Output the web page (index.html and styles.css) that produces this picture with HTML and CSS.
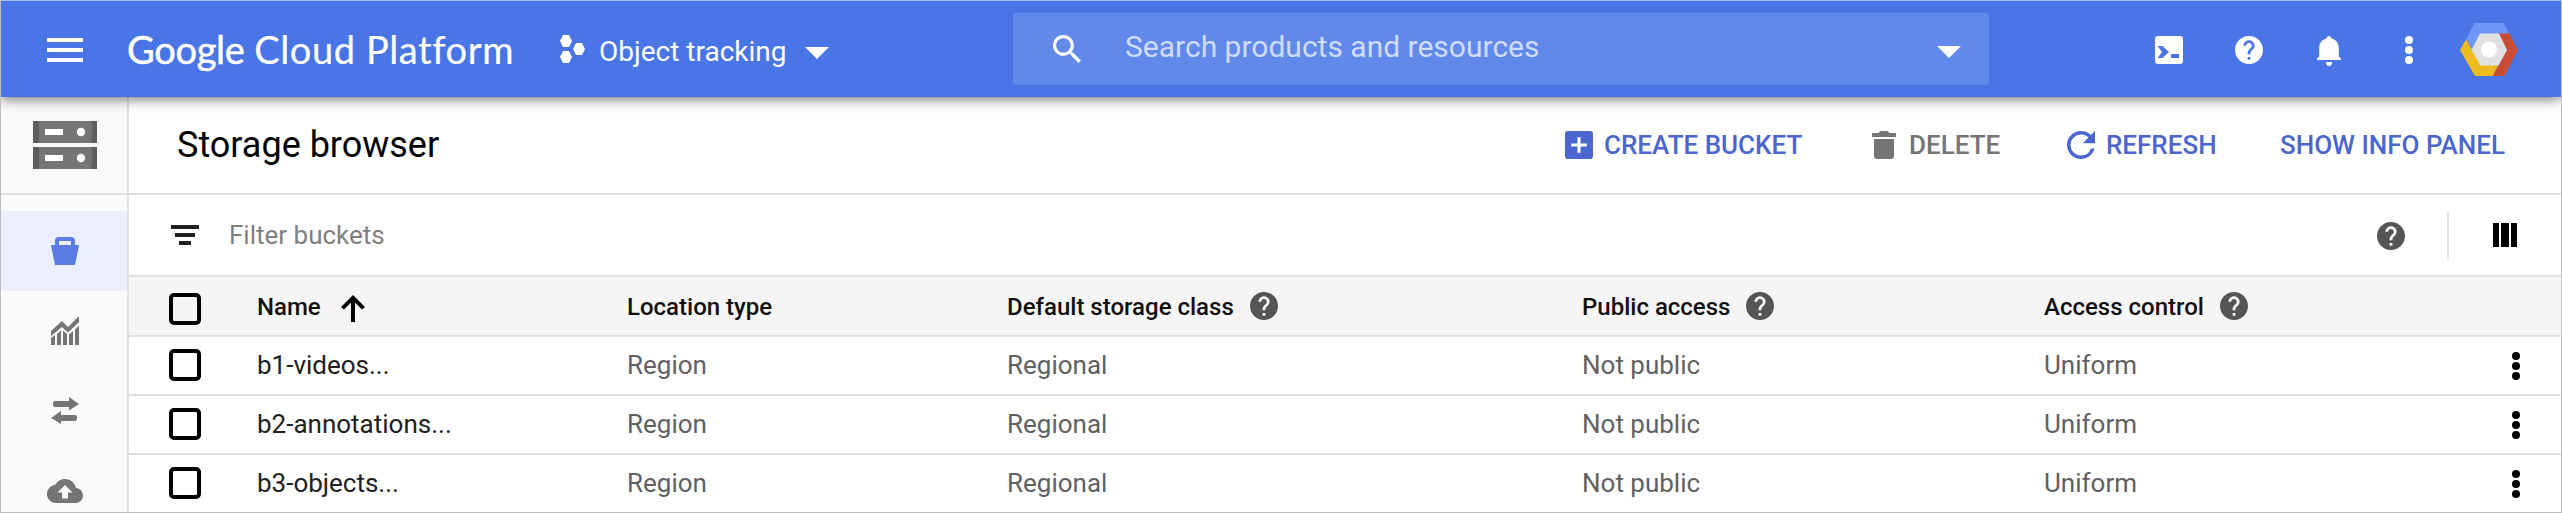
FILE: index.html
```html
<!DOCTYPE html>
<html lang="en">
<head>
<meta charset="utf-8">
<title>Storage browser</title>
<link rel="stylesheet" href="styles.css">
</head>
<body>
<svg class="defs" aria-hidden="true">
  <symbol id="help" viewBox="2 2 20 20"><path d="M12 2C6.48 2 2 6.48 2 12s4.48 10 10 10 10-4.48 10-10S17.52 2 12 2zm1 17h-2v-2h2v2zm2.07-7.75l-.9.92C13.45 12.9 13 13.5 13 15h-2v-.5c0-1.1.45-2.1 1.17-2.83l1.24-1.26c.37-.36.59-.86.59-1.41 0-1.1-.9-2-2-2s-2 .9-2 2H8c0-2.21 1.79-4 4-4s4 1.79 4 4c0 .88-.36 1.68-.93 2.25z"/></symbol>
  <symbol id="dots" viewBox="0 0 8 28"><circle cx="4" cy="4" r="4"/><circle cx="4" cy="14" r="4"/><circle cx="4" cy="24" r="4"/></symbol>
  <symbol id="caret" viewBox="0 0 24 12"><path d="M0 0h24L12 12z"/></symbol>
</svg>
<div class="app">
  <header class="topbar">
    <svg class="menu" viewBox="0 0 36 24"><path d="M0 0h36v4H0zM0 10h36v4H0zM0 20h36v4H0z"/></svg>
    <div class="logo"><span class="logo-google">Google</span> <span class="logo-cloud">Cloud Platform</span></div>
    <div class="project">
      <svg class="hexes" viewBox="0 0 25 28"><path d="M3 0h6l3 6-3 6H3L0 6zM16 8h6l3 6-3 6h-6l-3-6zM3 16h6l3 6-3 6H3l-3-6z"/></svg>
      <span class="project-name">Object tracking</span>
      <svg class="caret"><use href="#caret"/></svg>
    </div>
    <div class="search">
      <svg class="search-icon" viewBox="3 3 17.5 17.5"><path d="M15.5 14h-.79l-.28-.27C15.41 12.59 16 11.11 16 9.5 16 5.91 13.09 3 9.5 3S3 5.91 3 9.5 5.91 16 9.5 16c1.61 0 3.09-.59 4.23-1.57l.27.28v.79l5 4.99L20.49 19l-4.99-5zm-6 0C7.01 14 5 11.99 5 9.5S7.01 5 9.5 5 14 7.01 14 9.5 11.99 14 9.5 14z"/></svg>
      <span class="search-text">Search products and resources</span>
      <svg class="caret search-caret"><use href="#caret"/></svg>
    </div>
    <div class="tools">
      <svg class="shell" viewBox="0 0 28 28"><path fill-rule="evenodd" d="M3 0h22a3 3 0 0 1 3 3v22a3 3 0 0 1-3 3H3a3 3 0 0 1-3-3V3a3 3 0 0 1 3-3zM2.500 10h5l6.500 6-6.500 6h-5l4.500-6zM16 18h8v4h-8z"/></svg>
      <svg class="help"><use href="#help"/></svg>
      <svg class="bell" viewBox="0 0 24 30"><path d="M12 0c1.500 0 2.200 1 2.200 2.200C19 3.500 21.800 7 21.800 12v8.500L24 22.500V24H0v-1.500l2.200-2V12C2.200 7 5 3.500 9.800 2.200 9.800 1 10.500 0 12 0zM9 26h6c0 2.500-1.200 4-3 4s-3-1.500-3-4z"/></svg>
      <svg class="dots"><use href="#dots"/></svg>
      <svg class="avatar" viewBox="0 0 58 53">
        <path class="av-blue" d="M14.500 0h29L49.500 11H22l-10 15.500L6 16.500z"/>
        <path class="av-red" d="M38 10.500h11.500L58 27 44.500 53H32l7-11 8-15.500z"/>
        <path class="av-yellow" d="M6 16.500L0 27l15 26h17.500l6-11H21z"/>
        <path class="av-gray" d="M20 10.500h19L47 27l-8.500 15.500H20.500L11.500 27z"/>
        <circle class="av-dot" cx="29" cy="26.500" r="8"/>
      </svg>
    </div>
  </header>
  <div class="body">
    <nav class="sidebar">
      <div class="product">
        <svg viewBox="0 0 64 48">
          <path class="pr-mid" d="M0 0h64v22H0zM0 26h64v22H0z"/>
          <path class="pr-dark" d="M0 0h6v22H0zM58 0h6v22h-6l2-16zM0 26h6v22H0zM58 26h6v22h-6l2-16z"/>
          <path class="pr-light" d="M12 8h18v6H12zM12 34h18v6H12z"/>
          <circle class="pr-light" cx="48" cy="11" r="4.200"/><circle class="pr-light" cx="48" cy="37" r="4.200"/>
        </svg>
      </div>
      <div class="nav-item active"><svg viewBox="0 0 28 28"><path fill-rule="evenodd" d="M0 8h4V4a4 4 0 0 1 4-4h12a4 4 0 0 1 4 4v4h4l-4 20H4zM8 4v4h12V4z"/></svg></div>
      <div class="nav-item"><svg viewBox="0 0 28 28"><path d="M0 14L11 4l6 6L27 0h1v5L17 15.500 11 10 0 19zM0 21l4-3v10H0zM6 17l4-3.500V28H6zM12 13.500l4 3.500v11h-4zM18 17.500l4-3.500v14h-4zM24 12.500l4-4V28h-4z"/></svg></div>
      <div class="nav-item"><svg viewBox="0 0 28 28"><path d="M4 4h14V0l10 7-10 6.500V10H4a2 2 0 0 1-2-2V6a2 2 0 0 1 2-2zM10 14v4h14a2 2 0 0 1 2 2v2a2 2 0 0 1-2 2H10v3L0 21z"/></svg></div>
      <div class="nav-item"><svg class="cloud" viewBox="0 4 24 16"><path d="M19.350 10.040C18.670 6.590 15.640 4 12 4 9.110 4 6.600 5.640 5.350 8.040 2.340 8.360 0 10.910 0 14c0 3.310 2.690 6 6 6h13c2.760 0 5-2.240 5-5 0-2.640-2.050-4.780-4.650-4.960zM14 13v4h-4v-4H7l5-5 5 5h-3z"/></svg></div>
    </nav>
    <main class="content">
      <section class="titlebar">
        <h1>Storage browser</h1>
        <button class="action create"><svg viewBox="3 3 18 18"><path d="M19 3H5a2 2 0 0 0-2 2v14a2 2 0 0 0 2 2h14a2 2 0 0 0 2-2V5a2 2 0 0 0-2-2zm-2 10h-4v4h-2v-4H7v-2h4V7h2v4h4v2z"/></svg><span>CREATE BUCKET</span></button>
        <button class="action delete"><svg viewBox="0 0 24 28"><path d="M0 2h6.500L8.500 0h7l2 2H24v4H0zM2 8h20v17a3 3 0 0 1-3 3H5a3 3 0 0 1-3-3z"/></svg><span>DELETE</span></button>
        <button class="action refresh"><svg viewBox="4 4 16 16"><path d="M17.650 6.350A7.960 7.960 0 0 0 12 4a8 8 0 1 0 7.730 10h-2.080A5.990 5.990 0 0 1 12 18a6 6 0 1 1 0-12c1.660 0 3.140.69 4.220 1.780L13 11h7V4l-2.350 2.350z"/></svg><span>REFRESH</span></button>
        <button class="action info"><span>SHOW INFO PANEL</span></button>
      </section>
      <section class="filterbar">
        <svg class="filter" viewBox="0 0 28 20"><path d="M0 0h28v4H0zM4 8h20v4H4zM8 16h12v4H8z"/></svg>
        <span class="filter-text">Filter buckets</span>
        <svg class="help"><use href="#help"/></svg>
        <span class="divider"></span>
        <svg class="columns" viewBox="0 0 24 24"><path d="M0 0h6v24H0zM8 0h8v24H8zM18 0h6v24h-6z"/></svg>
      </section>
      <section class="table">
        <div class="row head">
          <span class="box"></span>
          <span class="cell"><span class="label">Name</span><svg class="sort" viewBox="0 0 24 27"><path d="M10 27V7.500L3 14.500 0 12 12 0l12 12-3 2.500-7-7V27z"/></svg></span>
          <span class="cell"><span class="label">Location type</span></span>
          <span class="cell"><span class="label">Default storage class</span><svg class="help"><use href="#help"/></svg></span>
          <span class="cell"><span class="label">Public access</span><svg class="help"><use href="#help"/></svg></span>
          <span class="cell"><span class="label">Access control</span><svg class="help"><use href="#help"/></svg></span>
        </div>
        <div class="row item">
          <span class="box"></span><span class="cell name">b1-videos...</span><span class="cell">Region</span><span class="cell">Regional</span><span class="cell">Not public</span><span class="cell">Uniform</span><svg class="dots"><use href="#dots"/></svg>
        </div>
        <div class="row item">
          <span class="box"></span><span class="cell name">b2-annotations...</span><span class="cell">Region</span><span class="cell">Regional</span><span class="cell">Not public</span><span class="cell">Uniform</span><svg class="dots"><use href="#dots"/></svg>
        </div>
        <div class="row item">
          <span class="box"></span><span class="cell name">b3-objects...</span><span class="cell">Region</span><span class="cell">Regional</span><span class="cell">Not public</span><span class="cell">Uniform</span><svg class="dots"><use href="#dots"/></svg>
        </div>
      </section>
    </main>
  </div>
</div>
</body>
</html>
```
FILE: styles.css
```css
* { box-sizing: border-box; }
body { margin: 0; font-family: Roboto, "Liberation Sans", sans-serif; background: #fff; }
svg { display: block; flex: none; fill: currentColor; }
.defs { width: 0; height: 0; position: absolute; }
.app { height: 513px; display: flex; flex-direction: column; border: 1px solid #bdbdbd; border-top-color: #a3bbee; overflow: hidden; }

/* Top bar */
.topbar { flex: none; height: 96px; display: flex; align-items: center; padding: 0 43px 0 46px; color: #fff; background: #4a75e6; box-shadow: 0 2px 12px rgba(0, 0, 0, .55); z-index: 1; white-space: nowrap; }
.menu { width: 36px; height: 24px; margin-top: 2px; }
.logo { width: 433px; margin-left: 44px; font-family: Lato, sans-serif; font-size: 38px; line-height: 44px; font-variant-ligatures: none; }
.logo-google { letter-spacing: -.3px; -webkit-text-stroke: .5px #fff; }
.logo-cloud { letter-spacing: .6px; -webkit-text-stroke: .2px #fff; }
.project { width: 453px; display: flex; align-items: center; }
.hexes { width: 25px; height: 28px; margin-right: 14px; }
.project-name { width: 206px; padding-top: 5px; font-size: 28px; line-height: 34px; }
.caret { width: 24px; height: 12px; margin-top: 8px; }
.search { width: 976px; height: 72px; display: flex; align-items: center; padding: 0 28px 0 40px; border-radius: 3px; background: #6189e9; }
.search-icon { width: 28px; height: 28px; }
.search-text { flex: 1; margin: -6px 0 0 44px; font-size: 30px; color: #cfdcf9; }
.search-caret { margin-top: 6px; }
.tools { margin-left: auto; display: flex; align-items: center; }
.help { width: 28px; height: 28px; }
.dots { width: 8px; height: 28px; }
.tools .shell { width: 28px; height: 28px; margin: 2px 52px 0 0; }
.tools .help { margin: 2px 54px 0 0; }
.bell { width: 24px; height: 30px; margin: 4px 64px 0 0; }
.tools .dots { margin: 2px 47px 0 0; }
.avatar { width: 58px; height: 53px; }
.av-blue { fill: #7096f8; }
.av-red { fill: #c94d35; }
.av-yellow { fill: #edbd20; }
.av-gray { fill: #e1e1e3; }
.av-dot { fill: #fff; }

.body { flex: 1; min-height: 0; display: flex; }

/* Sidebar */
.sidebar { flex: none; width: 128px; border-right: 2px solid #e0e0e0; background: #fafafa; color: #757575; overflow: hidden; }
.product { height: 98px; margin-bottom: 16px; padding: 24px 0 0 32px; border-bottom: 2px solid #e0e0e0; }
.product svg { width: 64px; height: 48px; }
.pr-mid { fill: #757575; }
.pr-dark { fill: #5f5f5f; }
.pr-light { fill: #fff; }
.nav-item { height: 80px; padding-left: 2px; display: flex; align-items: center; justify-content: center; }
.nav-item.active { color: #5b7ce3; background: #ebeffc; }
.nav-item svg { width: 28px; height: 28px; }
.nav-item .cloud { width: 36px; height: 24px; }

/* Title and actions */
.content { flex: 1; min-width: 0; }
.titlebar { height: 98px; display: flex; align-items: center; padding: 0 49px 0 48px; border-bottom: 2px solid #e0e0e0; }
h1 { margin: 0 auto 0 0; font-size: 36px; font-weight: 400; line-height: 42px; color: #000; }
.action { display: flex; align-items: center; padding: 0; border: 0; background: none; font: 500 26px/32px Roboto, sans-serif; color: #4c66cf; text-align: left; white-space: nowrap; }
.action svg { width: 28px; height: 28px; margin-right: 11px; }
.create { width: 307px; }
.delete { width: 195px; color: #757575; }
.delete svg { width: 24px; margin-right: 13px; }
.refresh { width: 213px; }
.info { width: 232px; }

/* Filter */
.filterbar { height: 82px; display: flex; align-items: center; padding: 0 44px 0 42px; border-bottom: 2px solid #e0e0e0; color: #555; }
.filter { width: 28px; height: 20px; color: #212121; }
.filter-text { flex: 1; margin-left: 30px; font-size: 26px; color: #808080; }
.filterbar .help { margin-top: 2px; }
.divider { width: 2px; height: 47px; margin: 0 44px 0 42px; background: #e0e0e0; }
.columns { width: 24px; height: 24px; color: #000; }

/* Table */
.row { display: grid; grid-template-columns: 88px 370px 380px 575px 462px 468px 8px; align-items: center; padding-left: 40px; border-bottom: 2px solid #e0e0e0; }
.item { height: 59px; padding-bottom: 1px; font-size: 26px; color: #616161; }
.item:last-child { border-bottom-color: transparent; }
.head { height: 60px; font-size: 24px; font-weight: 500; color: #111; background: #f5f5f5; }
.box { width: 32px; height: 32px; border: 4px solid #000; border-radius: 5px; }
.head .box { margin-top: 6px; }
.cell { display: flex; align-items: center; white-space: nowrap; }
.item .cell { margin-top: -1px; }
.cell.name { color: #212121; }
.label { padding-top: 1px; }
.cell .help { margin-left: 16px; color: #555; }
.sort { width: 24px; height: 27px; margin: 5px 0 0 20px; color: #000; }
.item .dots { color: #000; margin-top: 2px; }
```
